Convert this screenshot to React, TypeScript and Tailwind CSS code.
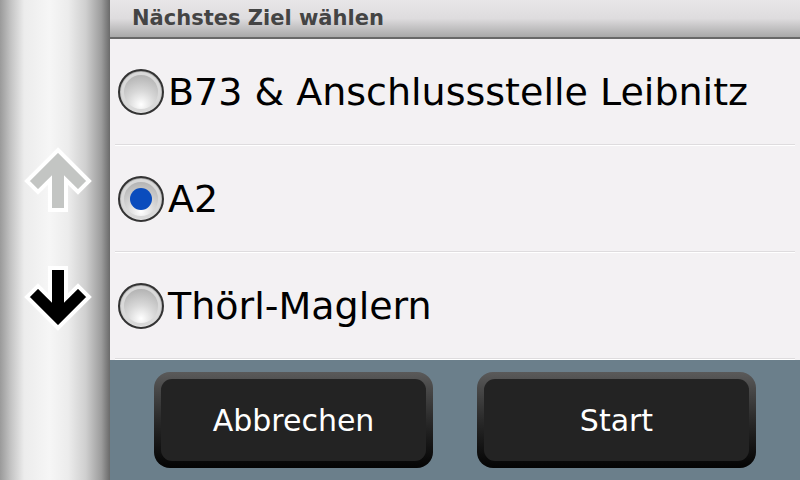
import React from 'react'

const font = { fontFamily: '"DejaVu Sans", Verdana, sans-serif' }

function Radio({ checked }: { checked?: boolean }) {
  return (
    <span className="relative flex h-[46px] w-[46px] shrink-0 items-center justify-center rounded-full border-[2px] border-[#333333] bg-[radial-gradient(circle_at_50%_80%,#ffffff_0%,#d8d8d8_35%,#9c9c9c_100%)]">
      <span className="absolute inset-[1px] rounded-full border-[3px] border-[#d9d9d9]" />
      {checked && <span className="relative h-[22px] w-[22px] rounded-full bg-[#0a4cbd]" />}
    </span>
  )
}

function Arrow({ down, color }: { down?: boolean; color: string }) {
  return (
    <svg width="70" height="66" viewBox="0 0 70 66" className={down ? 'rotate-180' : ''}>
      <polygon
        points="35,3 66,34 55,45 43,33 43,63 27,63 27,33 15,45 4,34"
        fill={color}
        stroke="#ffffff"
        strokeWidth="4"
        strokeLinejoin="miter"
      />
    </svg>
  )
}

function Row({ label, checked }: { label: string; checked?: boolean }) {
  return (
    <div className="flex h-[107px] flex-col">
      <div className="flex flex-1 items-center gap-[4px] pl-[8px]">
        <Radio checked={checked} />
        <span className="text-[38px] leading-none text-black">{label}</span>
      </div>
      <div className="mx-[5px] h-[1px] bg-[#dedcde]" />
      <div className="mx-[5px] h-[1px] bg-white" />
    </div>
  )
}

function Button({ children }: { children: React.ReactNode }) {
  return (
    <button className="h-[96px] w-[279px] rounded-[16px] bg-gradient-to-b from-[#5a5a5a] via-[#2a2a2a] to-[#050505] p-[7px]">
      <div className="flex h-full w-full items-center justify-center rounded-[11px] bg-[#232323] text-[30px] text-white">
        {children}
      </div>
    </button>
  )
}

export default function App() {
  return (
    <div className="flex h-[480px] w-[800px] overflow-hidden" style={font}>
      <aside className="flex w-[110px] shrink-0 flex-col items-center bg-[linear-gradient(to_right,#9a9a9a_0%,#c4c4c4_10%,#ececec_22%,#f6f6f6_45%,#ececec_62%,#cfcfcf_78%,#9d9d9d_92%,#6a6a6a_100%)] pl-[6px] pt-[147px]">
        <Arrow color="#c3c5c3" />
        <div className="h-[52px]" />
        <Arrow down color="#000000" />
      </aside>
      <main className="flex flex-1 flex-col">
        <header className="flex h-[39px] items-center border-b-[2px] border-[#686868] bg-gradient-to-b from-[#e8e6e8] via-[#dedcde] to-[#a9a9a9] pl-[22px]">
          <h1 className="text-[21px] font-bold text-[#444444]">Nächstes Ziel wählen</h1>
        </header>
        <section className="bg-[#f3f1f3]">
          <Row label="B73 & Anschlussstelle Leibnitz" />
          <Row label="A2" checked />
          <Row label="Thörl-Maglern" />
        </section>
        <footer className="flex flex-1 items-center justify-center gap-[44px] bg-[#6b7f8b]">
          <Button>Abbrechen</Button>
          <Button>Start</Button>
        </footer>
      </main>
    </div>
  )
}
